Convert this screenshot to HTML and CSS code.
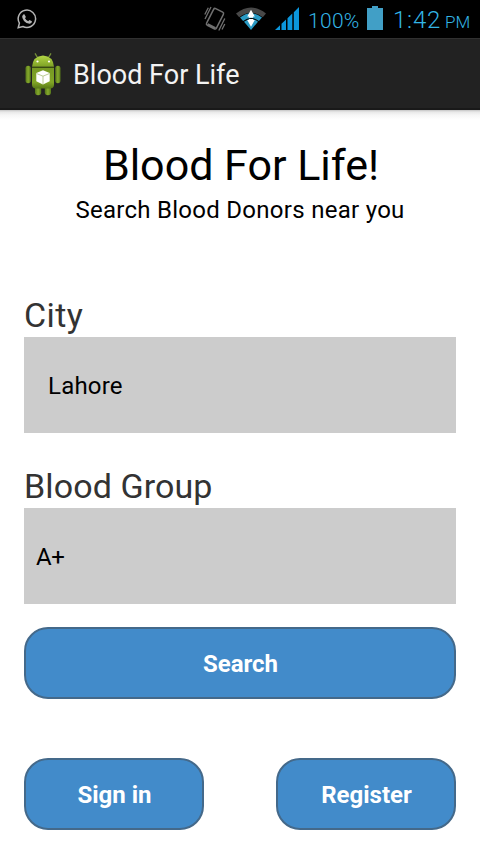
FILE: index.html
```html
<!DOCTYPE html>
<html lang="en">
<head>
<meta charset="utf-8">
<title>Blood For Life</title>
<link rel="stylesheet" href="styles.css">
</head>
<body>
<header class="status">
  <svg class="whatsapp" width="20" height="20" viewBox="0 0 20 20" fill="none">
    <path d="M1.200 18.800 2.400 14.200A8.700 8.700 0 1 1 5.900 17.500Z" stroke="#b4b4b4" stroke-width="1.500"/>
    <path d="M6.200 5.600 7.400 5.200 8.900 8 8 9.300Q9.100 11.500 11.200 12.300L12.400 11 15 12.300Q15 14.600 12.600 14.800 9.600 14.800 7 11.900 4.900 9.200 5.200 7.200Z" fill="#b4b4b4"/>
  </svg>
  <svg class="vibrate" width="22" height="26" viewBox="0 0 22 26" fill="none" stroke="#707070">
    <rect x="5.500" y="3.400" width="11" height="18.600" rx="1.600" stroke-width="1.500" transform="rotate(27 11 12.700)"/>
    <path d="M3.700 18.200 11.400 22.200" stroke-width="2.400"/>
    <path d="M1 13 7 1M.8 8.500 4.300 1.800M14.800 24.500 20.800 12.500M18 23.500 20.800 18" stroke-width="1.300"/>
  </svg>
  <svg class="wifi" width="30" height="23" viewBox="0 0 30 23">
    <path d="M0 6.500Q15-5.500 30 6.500L26.800 10.200Q15 1.200 3.200 10.200Z" fill="#484848"/>
    <path d="M4 10.500Q15 2 26 10.500L22.900 14.100Q15 8 7.100 14.100ZM8 14.700Q15 9.500 22 14.700L15 23Z" fill="#299ac4"/>
    <path d="M15 2.700 18.800 9.400H11.200ZM15 19.700 11.200 13H18.800Z" fill="#fff"/>
    <path d="M12.800 8.800h4.400v2h-4.400ZM12.800 12h4.400v1.500h-4.400Z" fill="#fff"/>
  </svg>
  <svg class="signal" width="24" height="23" viewBox="0 0 24 23" fill="#0b96dc">
    <path d="M0 23 5 18.200V23ZM6.500 16.800 11 12.500V23H6.500ZM12.500 11.200 17.300 6.500V23H12.500ZM18.800 5.200 24 0V23H18.800Z"/>
  </svg>
  <span class="percent">100%</span>
  <svg class="battery" width="16" height="24" viewBox="0 0 16 24" fill="#419fc6">
    <path d="M5 0h6v2h5v22H0V2h5Z"/>
  </svg>
  <span class="clock">1:42</span><span class="ampm">PM</span>
</header>
<div class="actionbar">
  <svg class="robot" width="36" height="43" viewBox="0 0 36 43">
    <defs>
      <linearGradient id="body" x1="0" y1="0" x2="0" y2="1"><stop offset="0" stop-color="#769923"/><stop offset=".7" stop-color="#81a526"/><stop offset="1" stop-color="#587817"/></linearGradient>
      <linearGradient id="head" x1="0" y1="0" x2="0" y2="1"><stop offset="0" stop-color="#b4d746"/><stop offset="1" stop-color="#7da124"/></linearGradient>
      <linearGradient id="limb" x1="0" y1="0" x2="1" y2="0"><stop offset="0" stop-color="#55751a"/><stop offset=".5" stop-color="#86aa2c"/><stop offset="1" stop-color="#55751a"/></linearGradient>
    </defs>
    <path d="M10.300.8 12.500 4.500M25.700.8 23.500 4.500" stroke="#748f38" stroke-width="1.300" stroke-linecap="round"/>
    <rect x="10" y="31" width="6.200" height="11.200" rx="3" fill="url(#limb)"/>
    <rect x="19.800" y="31" width="6.200" height="11.200" rx="3" fill="url(#limb)"/>
    <rect x=".5" y="12.700" width="5.300" height="17.500" rx="2.600" fill="url(#limb)"/>
    <rect x="30.200" y="12.700" width="5.300" height="17.500" rx="2.600" fill="url(#limb)"/>
    <path d="M7 15h22v16.500q0 4-4 4H11q-4 0-4-4Z" fill="url(#body)"/>
    <path d="M7 13.700Q8 3 18 2.500 28 3 29 13.700Z" fill="url(#head)"/>
    <path d="M7 14.400h22" stroke="#3c5010" stroke-width="1"/>
    <circle cx="12.500" cy="8.500" r="1.100" fill="#fff"/><circle cx="24" cy="8.500" r="1.100" fill="#fff"/>
    <path d="M18 17.200 24.700 20V28.300L18 31.400 11.300 28.300V20Z" fill="#fff"/>
    <path d="M11.500 20.500 18 23.200 24.500 20.500M18 23.200V31" fill="none" stroke="#a9be78" stroke-width=".8"/>
  </svg>
  <span class="apptitle">Blood For Life</span>
</div>
<main class="content">
  <h1 class="title">Blood For Life!</h1>
  <p class="subtitle">Search Blood Donors near you</p>
  <label class="label label-city">City</label>
  <div class="field field-city">Lahore</div>
  <label class="label label-group">Blood Group</label>
  <div class="field field-group">A+</div>
  <button class="btn">Search</button>
  <div class="actions">
    <button class="btn">Sign in</button>
    <button class="btn">Register</button>
  </div>
</main>
</body>
</html>
```
FILE: styles.css
```css
* { box-sizing: border-box; }
body {
  margin: 0;
  width: 480px;
  height: 854px;
  overflow: hidden;
  background: #fff;
  color: #000;
  font-family: Roboto, "Liberation Sans", sans-serif;
}
svg { display: block; flex: none; }
.status {
  display: flex;
  align-items: flex-start;
  height: 38px;
  background: #000;
  color: #33b5e5;
  font-weight: 300;
  white-space: nowrap;
}
.whatsapp { margin: 9px 0 0 17px; }
.vibrate { margin: 6px 0 0 167px; }
.wifi { margin: 7px 0 0 10px; }
.signal { margin: 7px 0 0 9px; }
.percent { width: 58px; padding-left: 9px; font-size: 21px; line-height: 42px; letter-spacing: .3px; }
.battery { margin: 6px 0 0 10px; }
.clock { width: 50px; margin-left: 10px; font-size: 24px; line-height: 40px; letter-spacing: .8px; }
.ampm { margin-left: 2px; font-size: 17px; line-height: 44px; }
.actionbar {
  display: flex;
  height: 72px;
  background: #222;
  border-top: 1px solid #303030;
  border-bottom: 2px solid #191919;
}
.robot { margin: 14px 0 0 25px; }
.apptitle { margin-left: 12px; font-size: 27px; line-height: 73px; color: #f3f3f3; white-space: nowrap; }
.content {
  display: flex;
  flex-direction: column;
  height: 744px;
  padding: 29px 24px 24px;
  background: linear-gradient(#c4c4c4, #e8e8e8 2px, #f6f6f6 5px, #fff 10px);
}
.title { margin: 0; padding-left: 2px; font-size: 43px; font-weight: 400; line-height: 53px; height: 52px; text-align: center; white-space: nowrap; }
.subtitle { margin: 5px 0 0; font-size: 24px; line-height: 28px; text-align: center; letter-spacing: .28px; white-space: nowrap; }
.label { height: 42px; font-size: 34px; line-height: 41px; color: #333; letter-spacing: .1px; }
.label-city { margin-top: 71px; letter-spacing: .4px; }
.label-group { margin-top: 33px; }
.field { height: 96px; background: #ccc; font-size: 24px; line-height: 98px; }
.field-city { padding-left: 24px; letter-spacing: .2px; }
.field-group { padding-left: 12px; letter-spacing: -.3px; }
.btn {
  height: 72px;
  flex: none;
  padding: 2px 0 0 1px;
  border: 2px solid #44698a;
  border-radius: 24px;
  background: #428bca;
  color: #fff;
  font: 700 24px/66px Roboto, "Liberation Sans", sans-serif;
  margin-top: 23px;
}
.actions { display: flex; justify-content: space-between; margin-top: 59px; }
.actions .btn { width: 180px; margin: 0; }
```
